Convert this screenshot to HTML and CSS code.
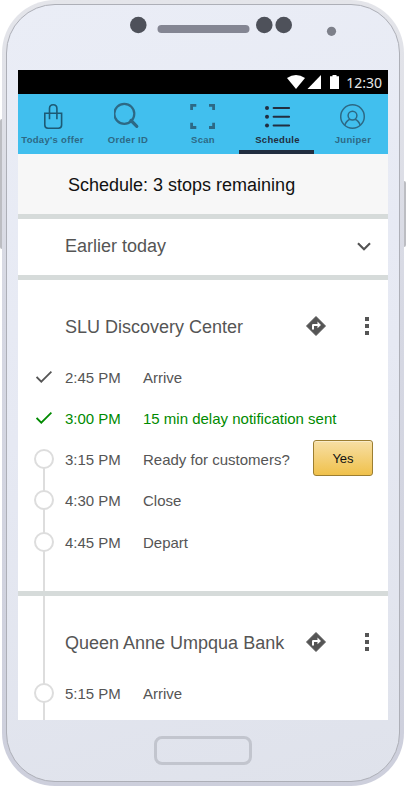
FILE: index.html
```html
<!DOCTYPE html>
<html lang="en">
<head>
    <meta charset="UTF-8">
    <meta name="viewport" content="width=device-width, initial-scale=1.0">
    <title>Schedule</title>
    <link rel="stylesheet" href="styles.css">
</head>
<body>
    <svg width="0" height="0" class="defs">
        <symbol id="directions" viewBox="0 0 20 20">
            <path fill="#555" d="M10 0 L20 10 L10 20 L0 10 Z" stroke="#555" stroke-linejoin="round" transform="translate(.5 .5) scale(.95)"/>
            <path fill="#fff" d="M6 13.5 V9.2 Q6 8 7.2 8 H11.5 V5.5 L15 9 L11.5 12.3 V10 H8 V13.5 Z"/>
        </symbol>
        <symbol id="more" viewBox="0 0 4 18">
            <path fill="#555" d="M0 0h4v4h-4z M0 7h4v4h-4z M0 14h4v4h-4z"/>
        </symbol>
        <symbol id="check" viewBox="0 0 16 12">
            <path fill="none" stroke="currentColor" stroke-width="1.8" d="M.6 6 L5.3 10.7 L15.4 .7"/>
        </symbol>
    </svg>

    <div class="phone">
        <span class="side-btn left"></span>
        <span class="side-btn right"></span>
        <div class="face">
            <div class="top">
                <svg width="396" height="65" viewBox="5 5 396 65">
                    <circle cx="138.3" cy="25" r="8.3" fill="#4e515a"/>
                    <rect x="157.5" y="25" width="92" height="8" rx="4" fill="#848693"/>
                    <circle cx="264.3" cy="25" r="8.3" fill="#4e515a"/>
                    <circle cx="283.7" cy="25" r="8.3" fill="#4e515a"/>
                    <circle cx="331.5" cy="31.3" r="4.6" fill="#7d808a"/>
                </svg>
            </div>

            <div class="screen">
                <div class="status">
                    <svg width="52" height="14" viewBox="0 0 52 14" fill="#fff">
                        <path d="M0 3 Q9 -3 18 3 L9 14 Z"/>
                        <path d="M20.5 14 L34 0 V14 Z"/>
                        <path d="M43 1.2 h2.5 V0 h4 v1.2 H52 V14 h-9 Z"/>
                    </svg>
                    <span class="time">12:30</span>
                </div>

                <div class="tabs">
                    <div class="tab">
                        <svg width="28" height="28" viewBox="0 0 28 28" fill="none" stroke="#1d5a75" stroke-width="1.6">
                            <path d="M5.8 11.2 H22.6 V23 Q22.6 26.2 19.4 26.2 H9 Q5.8 26.2 5.8 23 Z"/>
                            <path d="M10.5 17.3 V6.5 Q10.5 2.8 14.2 2.8 Q17.9 2.8 17.9 6.5 V17.3"/>
                        </svg>
                        <span>Today's offer</span>
                    </div>
                    <div class="tab">
                        <svg width="28" height="28" viewBox="0 0 28 28" fill="none" stroke="#2d6985">
                            <circle cx="10.3" cy="11.8" r="10" stroke-width="2.2"/>
                            <path d="M17 18.5 L22.8 24.3" stroke-width="3.2" stroke-linecap="round"/>
                        </svg>
                        <span>Order ID</span>
                    </div>
                    <div class="tab">
                        <svg width="28" height="28" viewBox="0 0 28 28" fill="none" stroke="#2d6985" stroke-width="2.8">
                            <path d="M2.6 8 V3.4 H7.3 M20 3.4 H24.6 V8 M24.6 20.8 V25.5 H20 M7.3 25.5 H2.6 V20.8"/>
                        </svg>
                        <span>Scan</span>
                    </div>
                    <div class="tab active">
                        <svg width="28" height="28" viewBox="0 0 28 28" fill="#222e40">
                            <circle cx="4" cy="6" r="2"/>
                            <circle cx="4" cy="14.8" r="2"/>
                            <circle cx="4" cy="23.5" r="2"/>
                            <path d="M10.6 6 H26.1 M10.6 14.8 H26.1 M10.6 23.5 H26.1" stroke="#222e40" stroke-width="2" stroke-linecap="round"/>
                        </svg>
                        <span>Schedule</span>
                    </div>
                    <div class="tab last">
                        <svg width="28" height="28" viewBox="0 0 28 28" fill="none" stroke="#2d6985" stroke-width="1.5">
                            <circle cx="13.5" cy="14.5" r="11.8"/>
                            <circle cx="13.5" cy="13.6" r="4.4"/>
                            <path d="M5.8 23.2 Q7.5 18.5 11 17.3 M21.2 23.2 Q19.5 18.5 16 17.3"/>
                        </svg>
                        <span>Juniper</span>
                    </div>
                </div>

                <div class="title">Schedule: 3 stops remaining</div>

                <div class="earlier">
                    <span>Earlier today</span>
                    <svg width="14" height="9" viewBox="0 0 14 9" fill="none" stroke="#555" stroke-width="2.2">
                        <path d="M1 1.2 L7 7.2 L13 1.2"/>
                    </svg>
                </div>

                <div class="stop first">
                    <div class="stop-head">
                        <span class="name">SLU Discovery Center</span>
                        <svg class="dir" width="20" height="20"><use href="#directions"/></svg>
                        <svg class="more" width="4" height="18"><use href="#more"/></svg>
                    </div>
                    <div class="row">
                        <span class="mark"><svg width="16" height="12"><use href="#check"/></svg></span>
                        <span class="when">2:45 PM</span>
                        <span>Arrive</span>
                    </div>
                    <div class="row done">
                        <span class="mark"><svg width="16" height="12"><use href="#check"/></svg></span>
                        <span class="when">3:00 PM</span>
                        <span>15 min delay notification sent</span>
                    </div>
                    <div class="row">
                        <span class="mark"><i class="dot"></i></span>
                        <span class="when">3:15 PM</span>
                        <span>Ready for customers?</span>
                        <button class="yes">Yes</button>
                    </div>
                    <div class="row">
                        <span class="mark"><i class="dot"></i></span>
                        <span class="when">4:30 PM</span>
                        <span>Close</span>
                    </div>
                    <div class="row depart">
                        <span class="mark"><i class="dot"></i></span>
                        <span class="when">4:45 PM</span>
                        <span>Depart</span>
                    </div>
                </div>

                <div class="stop second">
                    <div class="stop-head">
                        <span class="name">Queen Anne Umpqua Bank</span>
                        <svg class="dir" width="20" height="20"><use href="#directions"/></svg>
                        <svg class="more" width="4" height="18"><use href="#more"/></svg>
                    </div>
                    <div class="row">
                        <span class="mark"><i class="dot"></i></span>
                        <span class="when">5:15 PM</span>
                        <span>Arrive</span>
                    </div>
                </div>
            </div>

            <div class="home"></div>
        </div>
    </div>
</body>
</html>
```
FILE: styles.css
```css
* {
    box-sizing: border-box;
}
body {
    margin: 0;
    background: #fff;
    font-family: "Liberation Sans", Arial, sans-serif;
    color: #555;
    overflow: hidden;
}
.defs {
    position: absolute;
}
.phone {
    position: relative;
    width: 402px;
    height: 786px;
    margin: 0 2px;
    padding: 4px;
    border-radius: 53px;
    background: linear-gradient(#e4e5ea, #d6d8e3 40%, #cdcfdc);
}
.side-btn {
    position: absolute;
    width: 2px;
    background: #bcbdc2;
}
.side-btn.left {
    left: -2px;
    top: 119px;
    height: 130px;
    border-radius: 2px 0 0 2px;
}
.side-btn.right {
    right: -2px;
    top: 181px;
    height: 66px;
    border-radius: 0 2px 2px 0;
}
.face {
    height: 778px;
    border: 1px solid #adafb7;
    border-radius: 49px;
    background: linear-gradient(165deg, #eaedf6, #e6e9f3 50%, #dfe2eb);
    display: flex;
    flex-direction: column;
    align-items: center;
    overflow: hidden;
}
.top {
    height: 65px;
}
.screen {
    width: 370px;
    height: 650px;
    background: #fff;
    overflow: hidden;
}
.status {
    height: 24px;
    background: #000;
    display: flex;
    align-items: center;
    justify-content: flex-end;
    gap: 7px;
    padding-right: 6px;
}
.time {
    font: 14px/24px "Noto Sans", sans-serif;
    color: #e8e8e8;
    padding-top: 2px;
}
.tabs {
    height: 60px;
    background: #41bfee;
    display: grid;
    grid-template-columns: 69px 82px 68px 77px 74px;
}
.tab {
    display: flex;
    flex-direction: column;
    align-items: center;
    padding-top: 8px;
    font-size: 9.5px;
    font-weight: bold;
    letter-spacing: 0.3px;
    line-height: 12px;
    color: #2d6985;
    white-space: nowrap;
}
.tab span {
    margin-top: 4px;
}
.tab.active {
    color: #222e40;
    margin-left: 2px;
    border-bottom: 4px solid #222e40;
}
.tab.active span {
    margin-left: 2px;
}
.tab.last {
    padding-left: 4px;
}
.title {
    height: 65px;
    border-bottom: 5px solid #d6dbda;
    background: #f7f7f7;
    padding-left: 50px;
    font-size: 18px;
    line-height: 62px;
    color: #111;
}
.earlier {
    height: 61px;
    border-bottom: 5px solid #d6dbda;
    padding: 0 17px 2px 47px;
    display: flex;
    align-items: center;
    justify-content: space-between;
    font-size: 18px;
}
.stop {
    position: relative;
    padding-top: 23px;
}
.stop.first {
    height: 316px;
    border-bottom: 5px solid #d6dbda;
}
.stop.second {
    height: 124px;
}
/* vertical line behind the markers */
.stop::before {
    content: "";
    position: absolute;
    left: 25px;
    top: 0;
    bottom: 0;
    width: 2px;
    background: #ddd;
}
.stop.first::before {
    top: 179px;
}
.stop-head {
    height: 47px;
    margin-bottom: 7px;
    padding: 0 19px 0 47px;
    display: flex;
    align-items: center;
    font-size: 18px;
    white-space: nowrap;
}
.name {
    flex: 1;
    padding-top: 2px;
}
.dir, .more {
    margin-bottom: 1px;
}
.more {
    margin-left: 39px;
}
.row {
    position: relative;
    height: 41px;
    display: flex;
    align-items: center;
    padding: 0 15px 0 16px;
    font-size: 15px;
    white-space: nowrap;
}
.mark {
    width: 20px;
    margin-right: 11px;
    padding-bottom: 2px;
    display: flex;
    justify-content: center;
}
.depart {
    padding-top: 1px;
}
.depart .mark, .second .mark {
    padding-bottom: 1px;
}
.dot {
    width: 20px;
    height: 20px;
    border: 2px solid #ddd;
    border-radius: 50%;
    background: #fff;
}
.when {
    width: 78px;
}
.done {
    color: #008a00;
}
.yes {
    width: 60px;
    height: 36px;
    margin: 0 0 3px auto;
    border: 1px solid #9c7e31;
    border-radius: 3px;
    background: linear-gradient(#f7dfa5, #f0c14b);
    box-shadow: inset 0 1px 0 rgba(255, 255, 255, 0.4);
    font: 13px "Liberation Sans", Arial, sans-serif;
    color: #111;
}
.home {
    width: 98px;
    height: 29px;
    margin-top: 16px;
    border: 3px solid #c2c5ce;
    border-radius: 8px;
}
```
